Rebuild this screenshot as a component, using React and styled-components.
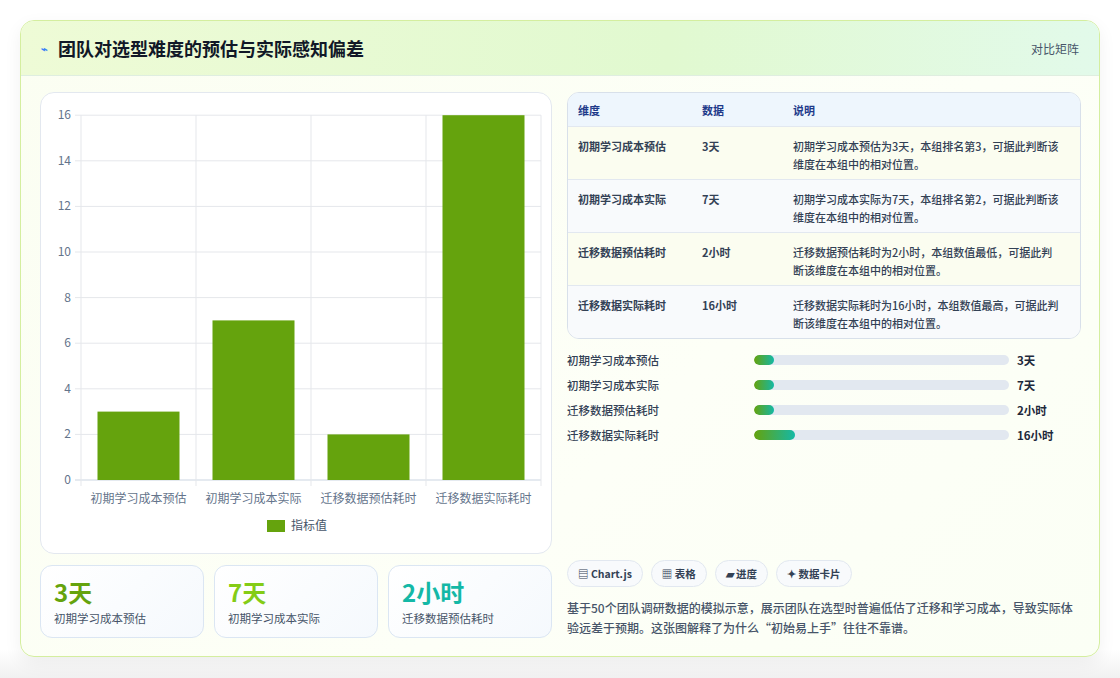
import React from "react";
import styled, { createGlobalStyle } from "styled-components";

const Global = createGlobalStyle`
  html,body{margin:0;padding:0;background:#f3f4f6;}
  body{font-family:"Noto Sans CJK SC","Noto Sans",sans-serif;color:#1e293b;}
  *{box-sizing:border-box;}
`;
const Page = styled.div`width:1120px;height:678px;padding:20px;background:linear-gradient(#fff 0,#fff 650px,#f1f1f1 100%);`;
const Card = styled.div`
  height:637px;border:1px solid #d4ee9f;border-radius:14px;overflow:hidden;
  background:linear-gradient(135deg,#fbfef2,#fdfff7 60%,#fbfff5);
  box-shadow:0 6px 18px rgba(0,0,0,0.06);display:flex;flex-direction:column;
`;
const Header = styled.div`
  height:55px;flex:none;display:flex;align-items:center;justify-content:space-between;
  padding:0 20px 0 20px;background:linear-gradient(90deg,#eefbd6,#e1f9d0 60%,#e2faea);
  border-bottom:1px solid #dfeee0;
`;
const Title = styled.h1`margin:0;font-size:18px;font-weight:700;color:#111827;display:flex;align-items:center;gap:10px;`;
const Spark = styled.span`font-size:11px;color:#3b82f6;`;
const HeadLink = styled.span`font-size:12px;color:#475569;`;
const Body = styled.div`flex:1;display:grid;grid-template-columns:512px 514px;gap:15px;padding:16px 19px 18px 19px;`;
const Col = styled.div`display:flex;flex-direction:column;gap:11px;min-height:0;`;
const ChartBox = styled.div`height:462px;background:#fff;border:1px solid #e3e8ef;border-radius:14px;overflow:hidden;`;
const Stats = styled.div`display:grid;grid-template-columns:repeat(3,1fr);gap:10px;`;
const Stat = styled.div`height:73px;border:1px solid #dbe6f3;border-radius:12px;background:linear-gradient(135deg,#fff,#f5f9fd);padding:10px 13px;`;
const StatVal = styled.div`font-size:24px;font-weight:700;line-height:32px;color:${p=>p.c};`;
const StatLbl = styled.div`font-size:11.5px;color:#475569;margin-top:2px;`;
const Table = styled.div`border:1px solid #d8e0ea;border-radius:12px;overflow:hidden;background:#fff;`;
const Row = styled.div`
  display:grid;grid-template-columns:124px 91px 1fr;padding:0 10px;
  ${p=>p.head?`height:33px;align-items:center;background:#eef5fd;color:#1e3a8a;font-weight:700;`:`height:53px;padding-top:10px;`}
  background:${p=>p.head?"#eef6fd":p.alt?"#f8fafc":"#fbfdf0"};
  border-top:${p=>p.first?"none":"1px solid #e2e8f0"};font-size:11px;
`;
const Cell = styled.div`font-weight:${p=>p.b?700:500};color:${p=>p.head?"#1e3a8a":"#334155"};line-height:18px;padding-right:8px;`;
const Bars = styled.div`display:flex;flex-direction:column;gap:7px;margin-top:1px;`;
const BarRow = styled.div`display:grid;grid-template-columns:187px 255px 1fr;gap:0;align-items:center;height:18px;font-size:11.5px;color:#334155;font-weight:500;`;
const Track = styled.div`height:10px;border-radius:5px;background:#e2e8f0;overflow:hidden;`;
const Fill = styled.div`height:100%;border-radius:5px;background:linear-gradient(90deg,#65a30d,#14b8a6);`;
const BarVal = styled.span`padding-left:8px;font-weight:700;color:#1e293b;`;
const Spacer = styled.div`flex:1;`;
const Tags = styled.div`display:flex;gap:8px;`;
const Tag = styled.span`height:27px;padding:0 10px;border:1px solid #e2e8f0;border-radius:14px;background:#f8fafc;font-size:10.5px;font-weight:700;color:#334155;display:flex;align-items:center;gap:3px;`;
const Desc = styled.p`margin:0;font-size:12px;line-height:20px;color:#475569;font-weight:500;`;

const bars=[["初期学习成本预估",3],["初期学习成本实际",7],["迁移数据预估耗时",2],["迁移数据实际耗时",16]];

function Chart(){
  const x0=40,x1=500,y0=387,ys=22.8;const cw=(x1-x0)/4;
  return(
  <svg width="512" height="462" style={{display:"block"}} fontFamily="'Noto Sans CJK SC',sans-serif">
    {[0,2,4,6,8,10,12,14,16].map(v=>{const y=y0-v*ys;return(<g key={v}>
      <line x1={x0-6} x2={x1} y1={y} y2={y} stroke={v===0?"#cbd5e1":"#e5e7eb"}/>
      <text x={x0-10} y={y+4} fontSize="12" fill="#64748b" textAnchor="end">{v}</text></g>);})}
    {[0,1,2,3,4].map(i=><line key={i} x1={x0+i*cw} x2={x0+i*cw} y1={y0-16*ys} y2={y0+6} stroke="#e5e7eb"/>)}
    {bars.map(([l,v],i)=>{const cx=x0+cw*(i+.5);return(<g key={l}>
      <rect x={cx-41} y={y0-v*ys} width="82" height={v*ys} fill="#65a30d"/>
      <text x={cx} y={y0+23} fontSize="12" fill="#64748b" textAnchor="middle">{l}</text></g>);})}
    <rect x="226" y="427" width="18" height="12" fill="#65a30d"/>
    <text x="250" y="437" fontSize="12" fill="#475569">指标值</text>
  </svg>);
}

const rows=[
 ["初期学习成本预估","3天","初期学习成本预估为3天，本组排名第3，可据此判断该维度在本组中的相对位置。"],
 ["初期学习成本实际","7天","初期学习成本实际为7天，本组排名第2，可据此判断该维度在本组中的相对位置。"],
 ["迁移数据预估耗时","2小时","迁移数据预估耗时为2小时，本组数值最低，可据此判断该维度在本组中的相对位置。"],
 ["迁移数据实际耗时","16小时","迁移数据实际耗时为16小时，本组数值最高，可据此判断该维度在本组中的相对位置。"],
];
const prog=[["初期学习成本预估",20,"3天"],["初期学习成本实际",20,"7天"],["迁移数据预估耗时",20,"2小时"],["迁移数据实际耗时",41,"16小时"]];

export default function App(){
  return(<Page><Global/><Card>
    <Header><Title><Spark>⌁</Spark>团队对选型难度的预估与实际感知偏差</Title><HeadLink>对比矩阵</HeadLink></Header>
    <Body>
      <Col>
        <ChartBox><Chart/></ChartBox>
        <Stats>
          <Stat><StatVal c="#65a30d">3天</StatVal><StatLbl>初期学习成本预估</StatLbl></Stat>
          <Stat><StatVal c="#84cc16">7天</StatVal><StatLbl>初期学习成本实际</StatLbl></Stat>
          <Stat><StatVal c="#14b8a6">2小时</StatVal><StatLbl>迁移数据预估耗时</StatLbl></Stat>
        </Stats>
      </Col>
      <Col>
        <Table>
          <Row head first><Cell head b>维度</Cell><Cell head b>数据</Cell><Cell head b>说明</Cell></Row>
          {rows.map((r,i)=><Row key={i} alt={i%2===1}><Cell b>{r[0]}</Cell><Cell b>{r[1]}</Cell><Cell>{r[2]}</Cell></Row>)}
        </Table>
        <Bars>{prog.map(p=><BarRow key={p[0]}><span>{p[0]}</span><Track><Fill style={{width:p[1]}}/></Track><BarVal>{p[2]}</BarVal></BarRow>)}</Bars>
        <Spacer/>
        <Tags><Tag>▤ Chart.js</Tag><Tag>▦ 表格</Tag><Tag>▰ 进度</Tag><Tag>✦ 数据卡片</Tag></Tags>
        <Desc>基于50个团队调研数据的模拟示意，展示团队在选型时普遍低估了迁移和学习成本，导致实际体验远差于预期。这张图解释了为什么“初始易上手”往往不靠谱。</Desc>
      </Col>
    </Body>
  </Card></Page>);
}
